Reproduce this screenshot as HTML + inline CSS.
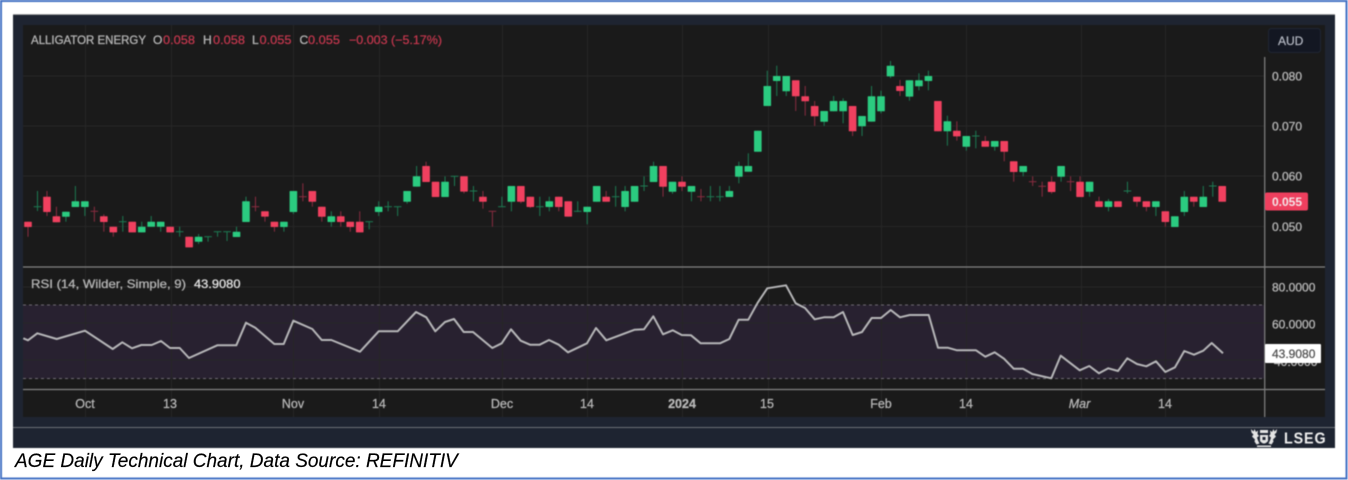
<!DOCTYPE html>
<html>
<head>
<meta charset="utf-8">
<style>
html,body{margin:0;padding:0;background:#fff}
body{width:1348px;height:480px;overflow:hidden;position:relative;font-family:"Liberation Sans",sans-serif}
#c{position:absolute;left:0;top:0;filter:blur(.5px)}
text{font-family:"Liberation Sans",sans-serif}
.a{fill:#b8b8b8;stroke:#b8b8b8;stroke-width:.3px;font-size:12px}
.t{fill:#b8b8b8;stroke:#b8b8b8;stroke-width:.25px;font-size:12.500px;text-anchor:middle}
.r{fill:#c8384f;stroke:#c8384f;stroke-width:.2px;font-size:12px}
.g{fill:#b4b4b4;stroke:#b4b4b4;stroke-width:.3px;font-size:12px}
#cap{position:absolute;left:15px;top:450px;font-size:19px;line-height:24px;font-style:italic;color:#000;white-space:nowrap;-webkit-text-stroke:.15px #000}
</style>
</head>
<body>
<svg id="c" width="1348" height="480" viewBox="0 0 1348 480" xmlns="http://www.w3.org/2000/svg">
<rect x="1" y="1" width="1345.500" height="477.500" fill="#fff" stroke="#4472c4" stroke-width="2"/>
<rect x="13" y="14" width="1322" height="434" fill="#1e2431"/>
<rect x="13" y="14" width="1322" height=".8" fill="#bbb"/>
<rect x="23" y="25" width="1302" height="392" fill="#1a1a1a"/>
<rect x="23" y="305" width="1241" height="73.500" fill="#282130"/>
<g id="grid" stroke="#262626" stroke-width="1" fill="none"></g>
<path d="M23 305H1264M23 378.500H1264" stroke="#6e6a72" stroke-width="1" stroke-dasharray="3 3" fill="none"/>
<path d="M23 267H1325M23 389.500H1325" stroke="#848484" stroke-width="1.300" fill="none"/>
<path d="M1264.700 57V417" stroke="#7c7c7c" stroke-width="1.300" fill="none"/>
<path d="M13 427.500H1335" stroke="#6c6f76" stroke-width="1" fill="none"/>
<g id="candles"></g>
<polyline id="rsi" fill="none" stroke="#b6b6b8" stroke-width="2" stroke-linejoin="round" points=""/>

<text x="31" y="44" class="g" textLength="115" lengthAdjust="spacingAndGlyphs">ALLIGATOR ENERGY</text>
<text x="153" y="44" class="g">O</text><text x="163" y="44" class="r" textLength="32" lengthAdjust="spacingAndGlyphs">0.058</text>
<text x="203" y="44" class="g">H</text><text x="213" y="44" class="r" textLength="32" lengthAdjust="spacingAndGlyphs">0.058</text>
<text x="252" y="44" class="g">L</text><text x="259.500" y="44" class="r" textLength="32" lengthAdjust="spacingAndGlyphs">0.055</text>
<text x="299.500" y="44" class="g">C</text><text x="308" y="44" class="r" textLength="32" lengthAdjust="spacingAndGlyphs">0.055</text>
<text x="349" y="44" class="r" textLength="93" lengthAdjust="spacingAndGlyphs">−0.003 (−5.17%)</text>

<rect x="1268.500" y="28.500" width="52" height="24" rx="3" fill="#131722" stroke="#1f2633"/>
<text x="1278" y="45" fill="#b8bcc6" stroke="#b8bcc6" stroke-width=".2" font-size="12">AUD</text>

<text x="1272" y="80.500" class="a">0.080</text>
<text x="1272" y="130.500" class="a">0.070</text>
<text x="1272" y="180.500" class="a">0.060</text>
<text x="1272" y="231" class="a">0.050</text>
<rect x="1265" y="192.500" width="43" height="18" rx="2" fill="#ee3f5e"/>
<text x="1272" y="206" fill="#f4e6e8" font-size="12" font-weight="700">0.055</text>

<text x="31" y="288" class="g" textLength="155" lengthAdjust="spacingAndGlyphs">RSI (14, Wilder, Simple, 9)</text>
<text x="194" y="288" fill="#e0e0e0" stroke="#e0e0e0" stroke-width=".3" font-size="12" textLength="46.500" lengthAdjust="spacingAndGlyphs">43.9080</text>

<text x="1272" y="291.500" class="a">80.0000</text>
<text x="1272" y="328.500" class="a">60.0000</text>
<text x="1274" y="366" class="a">40.0000</text>
<rect x="1265" y="344" width="56" height="19" rx="1" fill="#fff"/>
<text x="1272" y="358" fill="#4a4a4a" stroke="#4a4a4a" stroke-width=".2" font-size="12">43.9080</text>

<text x="85" y="408" class="t">Oct</text>
<text x="170" y="408" class="t">13</text>
<text x="293" y="408" class="t">Nov</text>
<text x="379" y="408" class="t">14</text>
<text x="502" y="408" class="t">Dec</text>
<text x="587" y="408" class="t">14</text>
<text x="682" y="408" class="t" font-weight="700">2024</text>
<text x="767" y="408" class="t">15</text>
<text x="881" y="408" class="t">Feb</text>
<text x="966" y="408" class="t">14</text>
<text x="1079.500" y="408" class="t" font-style="italic">Mar</text>
<text x="1165" y="408" class="t">14</text>

<g fill="#e4e4e4">
<path d="M1260 435h8v6q-4 5-8 0zM1262.500 437v3h3v-3z" fill-rule="evenodd"/>
<path d="M1251 429l2.500 2.500 1-2.500 1.500 3 2-1.500-.5 3.500 1.500 2-2 1.500 1 3 1.500 3-3 1-2-3 .5-2-3-3 1.500-2-2-2zM1277 429l-2.500 2.500-1-2.500-1.500 3-2-1.500.5 3.500-1.500 2 2 1.500-1 3-1.500 3 3 1 2-3-.5-2 3-3-1.500-2 2-2z"/>
<path d="M1260 430h8v3h-8zM1257 445.500h14v1.500h-14z"/>
</g>
<text x="1284" y="443.500" fill="#eeeeee" font-size="16" font-weight="700" textLength="42.500" lengthAdjust="spacingAndGlyphs" letter-spacing="1">LSEG</text>
</svg>
<div id="cap">AGE Daily Technical Chart, Data Source: REFINITIV</div>
<script>
var G=[85,171,293,379,502,587,682,768,881,966,1081,1165];
var d='';G.forEach(function(g){d+='M'+g+'.5 25V417'});
[76,126,176,226.5,287,323,360].forEach(function(y){d+='M23 '+y+'H1264'});
var gr=document.createElementNS('http://www.w3.org/2000/svg','path');gr.setAttribute('d',d);document.getElementById('grid').appendChild(gr);
var C=[['r',665,681,665,710],['g',620,620,573,633],['r',590,636,573,648],['r',649,667,620,667],['g',635,650,635,665],['g',604,621,558,621],['g',604,621,604,648],['r',634,634,620,665],['r',649,666,643,695],['r',680,697,680,710],['g',665,665,648,695],['r',665,697,665,697],['g',680,697,665,697],['g',665,680,648,680],['g',665,680,665,695],['r',680,697,680,697],['g',695,695,680,710],['r',710,742,710,742],['g',710,725,702,732],['g',710,710,710,725],['g',695,695,695,710],['g',695,695,695,723],['g',695,711,680,711],['g',604,666,590,666],['r',620,620,590,634],['r',634,650,634,665],['r',665,681,665,695],['g',665,681,665,695],['g',573,636,573,642],['r',590,590,550,604],['r',573,605,573,620],['r',620,650,620,665],['g',649,666,634,680],['r',649,666,634,680],['r',665,681,665,695],['r',665,697,634,697],['g',665,665,665,688],['g',620,636,604,648],['g',620,620,604,634],['g',620,620,620,648],['g',573,605,573,611],['g',529,560,498,560],['r',498,546,485,546],['r',545,591,545,591],['g',545,591,529,591],
['g',529,529,529,558],['r',529,575,529,580],['g',573,573,558,604],['r',590,605,573,626],['r',634,634,634,680],['g',620,620,590,620],['g',558,605,558,634],['r',558,605,558,610],['r',590,621,590,624],['g',620,620,590,648],['g',604,621,590,634],['r',590,621,590,634],['r',604,650,604,650],['g',634,634,604,636],['g',620,636,620,673],['g',558,605,558,605],['r',590,605,573,605],['g',590,590,558,620],['g',573,621,558,634],['g',558,605,558,605],['g',558,558,529,573],['g',498,546,485,546],['r',498,560,498,590],['g',545,575,545,581],['r',545,560,529,573],['g',558,575,558,604],['r',590,590,567,604],['g',590,590,558,604],['g',590,590,558,604],['g',573,591,558,591],['g',498,530,485,550],['g',498,515,460,515],['g',392,455,392,455],['g',258,318,212,318],['g',228,243,197,288],['g',228,274,228,288],['r',241,289,241,333],['r',289,304,258,347],['r',318,349,303,378],['g',333,365,333,378],['g',303,334,288,334],['g',303,334,295,370],['r',318,394,318,408],['g',348,379,348,408],['g',289,365,258,365],['g',289,334,272,340],['g',197,229,183,234],
['r',258,273,240,288],['g',241,290,241,302],['g',241,259,220,271],['g',228,243,212,271],['r',303,394,303,394],['g',364,394,347,437],['r',392,409,364,422],['g',408,440,408,452],['g',408,408,392,445],['r',423,440,408,440],['g',423,440,423,452],['r',423,455,423,484],['r',484,516,484,545],['g',498,516,498,529],['r',545,545,529,558],['r',559,559,545,590],['r',545,576,529,581],['g',498,530,498,545],['r',545,545,529,573],['r',545,591,529,591],['g',545,575,545,590],['r',604,621,590,621],['g',604,621,597,634],['r',604,621,604,621],['g',573,573,545,580],['r',590,605,590,620],['r',604,621,604,634],['g',604,621,604,648],['r',634,666,634,680],['g',649,681,649,681],['g',590,636,573,648],['r',590,605,590,620],['g',590,621,558,621],['g',558,558,545,590],['r',558,605,558,605]];
var h='';
C.forEach(function(c,i){
 var x=28+i*9.478,t=c[1]/3,b=c[2]/3,wt=c[3]/3,wb=c[4]/3,g=c[0]=='g';
 var wc=g?'#1d7a52':'#8a2c40',bc=g?'#2bcb80':'#f0405f';
 h+='<path d="M'+x.toFixed(2)+' '+wt.toFixed(1)+'V'+wb.toFixed(1)+'" stroke="'+wc+'" stroke-width="1"/>';
 if(t==b){h+='<path d="M'+(x-3.8).toFixed(2)+' '+t.toFixed(1)+'h7.600" stroke="'+wc+'" stroke-width="1"/>'}
 else{h+='<rect x="'+(x-3.8).toFixed(2)+'" y="'+t.toFixed(1)+'" width="7.600" height="'+(b-t).toFixed(1)+'" rx=".6" fill="'+bc+'"/>'}
});
document.getElementById('candles').innerHTML=h;
var a=[[70,235],[84,241],[112,220],[170,237],[255,212],[338,267],[367,247],[396,265],[424,255],[455,255],[483,243],[510,264],[539,264],[567,294],[652,256],[709,256],[738,188],[766,203],[823,252],[851,252],[880,182],[937,207],[965,240],[994,240],[1080,275],[1136,214],[1193,214],[1248,156],[1279,172],[1306,214],[1335,186]];
var b=[[12,177],[41,216],[69,216],[127,264],[155,250],[183,208],[212,242],[240,254],[269,254],[297,240],[326,254],[354,277],[411,250],[438,204],[469,241],[554,209],[582,208],[610,169],[639,223],[668,211],[695,225],[723,226],[752,250],[810,250],[838,237],[866,179],[895,179],[923,128],[952,85],[1008,76],[1037,130],[1065,144],[1094,178],[1122,172],[1151,172],[1179,156],[1208,225],[1236,216],[1265,174],[1293,174],[1322,150]];
var e=[[6,172],[35,165],[92,165],[120,263],[149,263],[177,271],[234,271],[262,290],[290,277],[318,296],[347,326],[375,326],[403,342],[460,355],[488,287],[545,331],[574,318],[603,340],[631,325],[660,333],[688,295],[717,312],[745,319],[774,304],[802,336],[831,322],[859,273],[888,284],[916,272],[941,249],[975,280]];
var p=[];
a.forEach(function(q){p.push((q[0]/3).toFixed(1)+','+(260+q[1]/3).toFixed(1))});
b.forEach(function(q){p.push((450+q[0]/3).toFixed(1)+','+(260+q[1]/3).toFixed(1))});
e.forEach(function(q){p.push((898+q[0]/3).toFixed(1)+','+(260+q[1]/3).toFixed(1))});
document.getElementById('rsi').setAttribute('points',p.join(' '));
</script>
</body>
</html>
